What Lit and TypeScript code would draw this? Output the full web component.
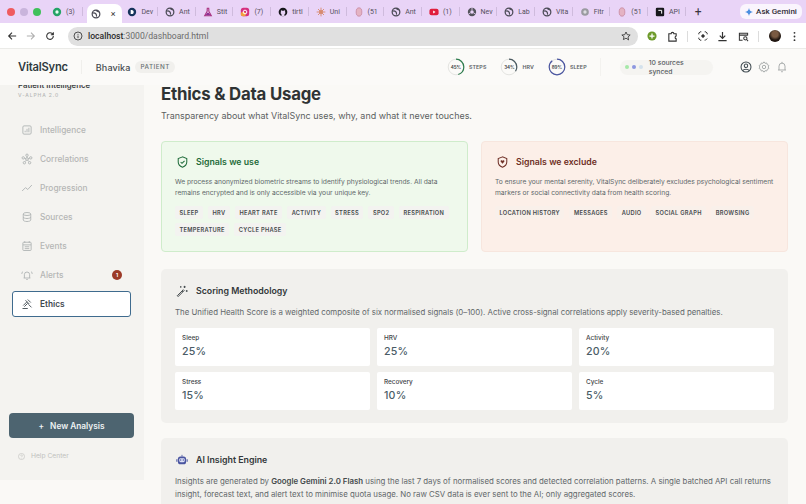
import { LitElement, html, css, svg } from 'lit'
import { customElement } from 'lit/decorators.js'

const globe = svg`<circle cx="6" cy="6" r="4.6" fill="none" stroke="#4a4a55" stroke-width="1.5"/><path d="M2 5c2-1 3 0 4 1s0 2 1 3M6 1.6c1 1 3 1 3.6 2.4" fill="none" stroke="#4a4a55" stroke-width="1.4"/>`

const favicons: Record<string, unknown> = {
  green: svg`<circle cx="6" cy="6" r="5" fill="#25a366"/><circle cx="6" cy="6" r="2" fill="#e7fff3"/>`,
  globe,
  dev: svg`<circle cx="6" cy="6" r="5" fill="#17345c"/><path d="M4.4 3.5v5h1.4c3 0 3-5 0-5z" fill="#fff"/>`,
  stitch: svg`<path d="M4.5 1.5h3M5 2v3L2 10.5h8L7 5V2" fill="#e9c9ee" stroke="#a8307e" stroke-width="1.3"/><path d="M3 10l2-3h2l2 3z" fill="#8d2f93"/>`,
  insta: svg`<rect x="1" y="1" width="10" height="10" rx="3" fill="#d6307f"/><rect x="1" y="6" width="6" height="5" rx="2" fill="#f2a13c"/><circle cx="6" cy="6" r="2.2" fill="none" stroke="#fff" stroke-width="1.2"/>`,
  github: svg`<circle cx="6" cy="6" r="5.2" fill="#17171c"/><path d="M4.2 11V8.5C3 8 3 6.8 3.5 6 3.3 5 3.5 4.3 3.7 4c.6 0 1.200.3 1.500.6h1.600C7.100 4.300 7.700 4 8.300 4c.2.3.4 1 .2 2 .5.800.5 2-.7 2.500V11z" fill="#e8d3f6"/>`,
  uni: svg`<circle cx="6" cy="6" r="2.4" fill="#d68a6e"/><path d="M6 .8v10.400M.8 6h10.400M2.400 2.400l7.200 7.200M9.600 2.400l-7.200 7.200" stroke="#d68a6e" stroke-width="1.1"/>`,
  thumb: svg`<ellipse cx="6" cy="6" rx="3.4" ry="5" fill="#e4b3c3" stroke="#c98ba2"/>`,
  youtube: svg`<rect x=".5" y="2" width="11" height="8" rx="2.4" fill="#e01f3d"/><path d="M5 4.300v3.400L7.800 6z" fill="#fff"/>`,
  chrome: svg`<circle cx="6" cy="6" r="5" fill="#54545c"/><circle cx="6" cy="6" r="2.1" fill="#e8d3f6"/><path d="M6 1v3M1.700 8.500l2.600-1.500M10.300 8.500 7.700 7" stroke="#e8d3f6"/>`,
  fitr: svg`<circle cx="6" cy="6" r="4.6" fill="#9a9aa0"/><circle cx="6" cy="6" r="2" fill="#dcdce0"/>`,
  api: svg`<rect x="1" y="1" width="10" height="10" rx="1.5" fill="#18181c"/><path d="M4 4h4v4" fill="none" stroke="#fff" stroke-width="1.2"/>`,
}

const tabs: Array<[string, string]> = [
  ['green', '(3)'], ['active', ''], ['dev', 'Dev'], ['globe', 'Ant'], ['stitch', 'Stit'], ['insta', '(7)'],
  ['github', 'tirtl'], ['uni', 'Uni'], ['thumb', '(51'], ['globe', 'Ant'], ['youtube', '(1)'], ['chrome', 'Nev'],
  ['globe', 'Lab'], ['globe', 'Vita'], ['fitr', 'Fitr'], ['thumb', '(51'], ['api', 'API'],
]

const nav: Array<[string, unknown]> = [
  ['Intelligence', svg`<rect x="2.5" y="2.5" width="11" height="11" rx="1.5"/><path d="M5.500 11V9M8 11V6.500M10.500 11V5"/>`],
  ['Correlations', svg`<circle cx="8" cy="3" r="1.6"/><circle cx="3" cy="6.5" r="1.6"/><circle cx="13" cy="6.5" r="1.6"/><circle cx="8" cy="8" r="1.8"/><circle cx="4.5" cy="13" r="1.6"/><circle cx="11.5" cy="13" r="1.6"/><path d="M8 5v1.200M4.500 7l2 .6M11.500 7l-2 .6M7 9.500l-1.500 2M9 9.500l1.500 2"/>`],
  ['Progression', svg`<path d="M1.500 12 6 7.500l3 2.500 5.500-6"/>`],
  ['Sources', svg`<ellipse cx="8" cy="4" rx="5" ry="2"/><path d="M3 4v8c0 1.100 2.200 2 5 2s5-.9 5-2V4M3 8c0 1.100 2.200 2 5 2s5-.9 5-2"/>`],
  ['Events', svg`<rect x="2.5" y="3" width="11" height="11" rx="1"/><path d="M5 1.500V4M11 1.500V4M2.500 6.500h11M5 9h6M5 11.500h6"/>`],
  ['Alerts', svg`<path d="M4.500 12V7.500a3.500 3.500 0 0 1 7 0V12M3.500 12h9M7 14h2M2 3.500 1 6.500M14 3.500l1 3"/>`],
]

const useTags = ['Sleep', 'HRV', 'Heart rate', 'Activity', 'Stress', 'SpO2', 'Respiration', 'Temperature', 'Cycle phase']
const excludeTags = ['Location history', 'Messages', 'Audio', 'Social graph', 'Browsing']
const weights = [['Sleep', '25%'], ['HRV', '25%'], ['Activity', '20%'], ['Stress', '15%'], ['Recovery', '10%'], ['Cycle', '5%']]
const rings = [
  ['45%', 'STEPS', '#2f7d4f', 45],
  ['34%', 'HRV', '#4b5a60', 34],
  ['89%', 'SLEEP', '#4a55a0', 89],
] as const

@customElement('app-root')
export class AppRoot extends LitElement {
  static styles = css`
    :host {
      display: flex;
      flex-direction: column;
      width: 806px;
      height: 504px;
      overflow: hidden;
      background: #faf9f6;
      font-family: Inter, 'Liberation Sans', sans-serif;
      color: #2f3334;
    }
    svg { display: block; flex: none; }

    .tabbar {
      height: 23px;
      flex: none;
      display: flex;
      align-items: center;
      background: #e9d4f7;
      font-family: Roboto, 'Liberation Sans', sans-serif;
    }
    .lights { width: 49px; flex: none; display: flex; gap: 5px; padding-left: 7px; box-sizing: border-box; }
    .lights i { width: 8px; height: 8px; border-radius: 50%; }
    .tab {
      width: 37.7px;
      height: 100%;
      flex: none;
      box-sizing: border-box;
      display: flex;
      align-items: center;
      gap: 4px;
      padding-left: 3px;
      font-size: 7px;
      color: #55505c;
      position: relative;
      overflow: hidden;
      white-space: nowrap;
    }
    .tab::after {
      content: '';
      position: absolute;
      right: 4px;
      top: 7px;
      width: 1px;
      height: 9px;
      background: #cfbbdd;
    }
    .tab.active {
      background: #fff;
      border-radius: 7px 7px 0 0;
      height: 19px;
      align-self: flex-end;
      width: 35px;
      margin-right: 2.7px;
      padding-left: 4px;
      gap: 10px;
      color: #333;
      font-size: 9px;
    }
    .tab.active::after { display: none; }
    .plus { font-size: 12px; color: #3a3540; padding-left: 5px; width: 42px; }
    .plus::after { display: none; }
    .gemini {
      flex: none;
      width: 62px;
      height: 15px;
      margin-left: auto;
      margin-right: 4px;
      background: #faf5fd;
      border-radius: 6px;
      display: flex;
      align-items: center;
      justify-content: center;
      gap: 3px;
      font-size: 8px;
      font-weight: 500;
      color: #33303a;
    }

    .toolbar {
      height: 26px;
      flex: none;
      background: #fff;
      display: flex;
      align-items: center;
      padding: 1px 8px 0 7px;
      box-sizing: border-box;
      border-bottom: 1px solid #ebebe8;
    }
    .nav-btns { display: flex; gap: 9px; width: 61px; flex: none; }
    .address {
      width: 570px;
      height: 19px;
      flex: none;
      background: #e0e0e0;
      border-radius: 10px;
      display: flex;
      align-items: center;
      padding: 0 7px 0 5px;
      box-sizing: border-box;
      gap: 5px;
      font-family: Roboto, 'Liberation Sans', sans-serif;
      font-size: 8.6px;
      color: #6b6b6b;
    }
    .address b { font-weight: 500; color: #2c2c2c; }
    .address svg:last-child { margin-left: auto; }
    .tools { display: flex; align-items: center; flex: 1; padding-left: 9px; gap: 9.5px; }
    .tools .sep { width: 1px; height: 11px; background: #dcdcdc; }
    .avatar { width: 12px; height: 12px; border-radius: 50%; background: radial-gradient(circle at 50% 35%, #7a5a42 0 30%, #201611 60%); }

    .app-head {
      height: 36px;
      flex: none;
      display: flex;
      align-items: center;
      padding: 0 18px;
      background: #fbfaf8;
      z-index: 1;
    }
    .logo { font-size: 11.2px; font-weight: 600; letter-spacing: -0.2px; color: #2f3a40; padding-right: 13px; border-right: 1px solid #f0efec; line-height: 14px; }
    .user { font-size: 9px; font-weight: 500; color: #444a4e; margin-left: 14px; letter-spacing: 0.1px; }
    .role {
      font-size: 6.3px;
      font-weight: 500;
      letter-spacing: 0.5px;
      color: #6a7073;
      background: #f1f0ed;
      border-radius: 7px;
      padding: 2px 5px;
      margin-left: 5px;
    }
    .rings { display: flex; align-items: center; margin-left: 272px; gap: 14px; padding-right: 13px; border-right: 1px solid #f3f2ef; }
    .ring { display: flex; align-items: center; gap: 4px; }
    .ring-dial { position: relative; width: 18px; height: 18px; }
    .ring-dial span {
      position: absolute;
      inset: 0;
      display: flex;
      align-items: center;
      justify-content: center;
      font-size: 4.6px;
      font-weight: 600;
      color: #3f4548;
    }
    .ring label { font-size: 5.3px; font-weight: 600; color: #5a6064; letter-spacing: 0.1px; }
    .synced {
      margin-left: 19px;
      height: 15px;
      background: #f5f4f1;
      border-radius: 8px;
      padding: 0 6px 0 5px;
      display: flex;
      align-items: center;
      gap: 3.5px;
      font-size: 6.8px;
      font-weight: 500;
      color: #5a6064;
    }
    .synced i { width: 4px; height: 4px; border-radius: 50%; }
    .synced span { margin-left: 2px; }
    .head-icons { display: flex; gap: 6px; margin-left: 27px; align-items: center; }

    .body { flex: 1; display: flex; min-height: 0; }
    .sidebar {
      width: 144px;
      height: 395px;
      flex: none;
      background: #f4f3f0;
      box-sizing: border-box;
      padding: 0 13px 0 12px;
      display: flex;
      flex-direction: column;
      overflow: hidden;
    }
    .brand { font-size: 7.8px; font-weight: 600; color: #3d4244; margin-top: -4px; line-height: 9px; padding-left: 6px; white-space: nowrap; }
    .version { font-size: 5px; letter-spacing: 0.9px; color: #b6b8b6; font-weight: 500; margin-top: 2px; padding-left: 6px; height: 7px; line-height: 7px; }
    .nav { display: flex; flex-direction: column; gap: 3px; margin-top: 18px; }
    .nav-item {
      height: 26px;
      display: flex;
      align-items: center;
      gap: 7px;
      padding-left: 9px;
      font-size: 8.3px;
      font-weight: 500;
      color: #b4b6b5;
      position: relative;
    }
    .nav-item svg { fill: none; stroke: #b0b4b4; stroke-width: 1.2; }
    .badge {
      position: absolute;
      right: 9px;
      top: 8px;
      width: 10px;
      height: 10px;
      border-radius: 50%;
      background: #9c3a28;
      color: #fff;
      font-size: 5px;
      font-weight: 700;
      display: flex;
      align-items: center;
      justify-content: center;
    }
    .nav-item.on {
      box-sizing: border-box;
      background: #fff;
      border: 1px solid #3f6b8e;
      border-radius: 3px;
      color: #3f4a50;
      font-weight: 600;
      padding-left: 8px;
    }
    .nav-item.on svg { stroke: #3f4a50; }
    .new {
      margin-top: auto;
      margin-left: -3px;
      width: 125px;
      flex: none;
      height: 25px;
      background: #4d6470;
      border-radius: 4px;
      display: flex;
      align-items: center;
      justify-content: center;
      gap: 6px;
      color: #eef2f3;
      font-size: 8.3px;
      font-weight: 600;
    }
    .help {
      display: flex;
      align-items: center;
      gap: 6px;
      margin: 14px 0 19px 6px;
      font-size: 6.7px;
      line-height: 9px;
      color: #c0c1be;
    }

    .main { flex: 1; padding: 0 18px 0 17px; min-width: 0; }
    h1 { font-size: 16.8px; font-weight: 700; letter-spacing: -0.2px; color: #2f3334; margin: 0; line-height: 19px; }
    .sub { font-size: 8.95px; color: #5a5f60; margin: 6px 0 0; line-height: 12px; }
    .cards { display: grid; grid-template-columns: 307px 307px; gap: 13px; margin-top: 19px; }
    .card {
      height: 111px;
      box-sizing: border-box;
      border-radius: 4px;
      padding: 13px 13px 0;
    }
    .card.good { background: #eff9ec; border: 1px solid #cfeccb; }
    .card.bad { background: #fcefe8; border: 1px solid #f7e6de; }
    .card-head { display: flex; align-items: center; gap: 8px; height: 13px; padding-left: 2px; }
    .card-head h3 { margin: 0; font-size: 8.75px; font-weight: 600; }
    .good h3 { color: #1f6b3a; }
    .bad h3 { color: #6e2f26; }
    .card p { margin: 9px 0 0; font-size: 6.7px; line-height: 11px; color: #60686a; }
    .tags { display: flex; flex-wrap: wrap; gap: 4px 5px; margin-top: 7px; }
    .tag {
      font-size: 5.7px;
      font-weight: 600;
      letter-spacing: 0.3px;
      text-transform: uppercase;
      color: #454a4c;
      background: #f3f3f0;
      border-radius: 2px;
      padding: 0 4.5px;
      height: 13px;
      line-height: 13px;
    }
    .bad .tag { background: #f9f0ea; }

    .panel { background: #f1f0ed; border-radius: 5px; padding: 15px 14px 0; box-sizing: border-box; margin-top: 17px; }
    .panel.score { height: 154px; }
    .panel.ai { margin-top: 15px; height: 90px; }
    .panel-head { display: flex; align-items: center; gap: 8px; height: 13px; padding-left: 1px; }
    .panel-head h3 { margin: 0; font-size: 8.8px; font-weight: 600; color: #33383a; }
    .panel p { margin: 9px 0 0; font-size: 7.83px; line-height: 13px; color: #62676a; }
    .panel p b { font-weight: 600; color: #444a4c; }
    .weights { display: grid; grid-template-columns: repeat(3, 1fr); gap: 6px 7px; margin-top: 9px; }
    .weight { background: #fff; border-radius: 2px; height: 38px; box-sizing: border-box; padding: 6px 7px; }
    .weight small { display: block; font-size: 6.4px; font-weight: 500; color: #3f4548; line-height: 9px; }
    .weight strong { display: block; font-size: 10.6px; font-weight: 500; color: #4a5c66; line-height: 13px; margin-top: 2px; letter-spacing: 0.2px; }
  `

  private _fav(name: string) {
    return html`<svg width="10" height="10" viewBox="0 0 12 12">${favicons[name]}</svg>`
  }

  private _ring(r: (typeof rings)[number]) {
    const c = 2 * Math.PI * 7.8
    return html`<div class="ring">
      <div class="ring-dial">
        <svg width="18" height="18" viewBox="0 0 18 18">
          <circle cx="9" cy="9" r="7.8" fill="none" stroke="#e4e4e1" stroke-width="1"/>
          <circle cx="9" cy="9" r="7.8" fill="none" stroke=${r[2]} stroke-width="1.2"
            stroke-dasharray="${(c * r[3]) / 100} ${c}" transform="rotate(-90 9 9)"/>
        </svg>
        <span>${r[0]}</span>
      </div>
      <label>${r[1]}</label>
    </div>`
  }

  private _chrome() {
    return html`
      <div class="tabbar">
        <div class="lights">
          <i style="background:#ef5b5f"></i><i style="background:#c9b4dc"></i><i style="background:#3fc05a"></i>
        </div>
        ${tabs.map(([icon, label]) =>
          icon === 'active'
            ? html`<div class="tab active">${this._fav('globe')}<span>×</span></div>`
            : html`<div class="tab">${this._fav(icon)}<span>${label}</span></div>`
        )}
        <div class="tab plus">+</div>
        <div class="gemini">
          <svg width="8" height="8" viewBox="0 0 12 12"><path d="M6 0c.5 3.500 2.500 5.500 6 6-3.500.5-5.500 2.500-6 6-.5-3.500-2.500-5.500-6-6 3.500-.5 5.500-2.500 6-6z" fill="#4b8fe0"/></svg>
          Ask Gemini
        </div>
      </div>
      <div class="toolbar">
        <div class="nav-btns">
          <svg width="10" height="10" viewBox="0 0 12 12" fill="none" stroke="#333" stroke-width="1.3"><path d="M11 6H2M6 2 2 6l4 4"/></svg>
          <svg width="10" height="10" viewBox="0 0 12 12" fill="none" stroke="#b0b0b0" stroke-width="1.3"><path d="M1 6h9M6 2l4 4-4 4"/></svg>
          <svg width="10" height="10" viewBox="0 0 12 12" fill="none" stroke="#333" stroke-width="1.3"><path d="M10 6a4 4 0 1 1-1.200-2.800L10 4.500M10 1.500v3H7"/></svg>
        </div>
        <div class="address">
          <svg width="10" height="10" viewBox="0 0 12 12" fill="none" stroke="#333"><circle cx="6" cy="6" r="4.8"/><path d="M6 5.500v3M6 3.500v1"/></svg>
          <span><b>localhost</b>:3000/dashboard.html</span>
          <svg width="10" height="10" viewBox="0 0 12 12" fill="none" stroke="#333"><path d="m6 1.200 1.500 3.200 3.500.4-2.600 2.400.7 3.500L6 8.600l-3.100 1.700.7-3.500L1 4.800l3.500-.4z"/></svg>
        </div>
        <div class="tools">
          <svg width="10" height="10" viewBox="0 0 12 12"><circle cx="6" cy="6" r="5.5" fill="#6d9a2a"/><path d="M6 3v6M3 6h6" stroke="#fff" stroke-width="1.5"/></svg>
          <svg width="11" height="11" viewBox="0 0 12 12" fill="none" stroke="#333" stroke-width="1.2"><path d="M2 3h2.500c0-2 3-2 3 0H10v2.500c-1.500 0-1.500 3 0 3V11H2z"/></svg>
          <span class="sep"></span>
          <svg width="10" height="10" viewBox="0 0 12 12" fill="none" stroke="#333" stroke-width="1.2"><path d="M1 4V2.500L2.500 1H4M8 1h1.500L11 2.500V4M1 8v1.500L2.500 11H4M8 11h1l2-2"/><circle cx="6" cy="6" r="1.5" fill="#333"/></svg>
          <svg width="11" height="11" viewBox="0 0 12 12" fill="none" stroke="#333" stroke-width="1.3"><path d="M6 1v7M3 5l3 3 3-3M1.500 10.500h9"/></svg>
          <svg width="11" height="11" viewBox="0 0 12 12" fill="none" stroke="#333" stroke-width="1.1"><path d="M5 10H1.500V2.500h9V5M1.500 4.500h9"/><circle cx="8" cy="8" r="1.8"/><path d="m9.500 9.500 1.500 1.500"/></svg>
          <span class="sep"></span>
          <div class="avatar"></div>
          <svg width="9" height="11" viewBox="0 0 9 12" fill="#333"><circle cx="4.5" cy="2" r="1"/><circle cx="4.5" cy="6" r="1"/><circle cx="4.5" cy="10" r="1"/></svg>
        </div>
      </div>
    `
  }

  render() {
    return html`
      ${this._chrome()}
      <header class="app-head">
        <div class="logo">VitalSync</div>
        <div class="user">Bhavika</div>
        <div class="role">PATIENT</div>
        <div class="rings">${rings.map((r) => this._ring(r))}</div>
        <div class="synced">
          <i style="background:#a5e8a8"></i><i style="background:#8d97e0"></i><i style="background:#d3e1ec"></i>
          <span>10 sources synced</span>
        </div>
        <div class="head-icons">
          <svg width="12" height="12" viewBox="0 0 14 14" fill="none" stroke="#3f4a50" stroke-width="1.2"><circle cx="7" cy="7" r="5.8"/><circle cx="7" cy="5.6" r="2"/><path d="M3.400 11c1-2 6.200-2 7.200 0"/></svg>
          <svg width="12" height="12" viewBox="0 0 14 14" fill="none" stroke="#a5a9a9" stroke-width="1.1"><path d="m7 1 1.200 1.700 2-.4.6 2 1.900.9-.8 1.800.8 1.800-1.900.9-.6 2-2-.4L7 13l-1.200-1.700-2 .4-.6-2-1.900-.9L2.100 7l-.8-1.800 1.900-.9.6-2 2 .4z"/><circle cx="7" cy="7" r="2"/></svg>
          <svg width="12" height="12" viewBox="0 0 14 14" fill="none" stroke="#a5a9a9" stroke-width="1.1"><path d="M3.500 10.500V6a3.500 3.500 0 0 1 7 0v4.500M2.300 10.500h9.400M6 12.500h2M7 1v1.500"/></svg>
        </div>
      </header>
      <div class="body">
        <aside class="sidebar">
          <div class="brand">Patient Intelligence</div>
          <div class="version">V-ALPHA 2.0</div>
          <nav class="nav">
            ${nav.map(
              ([label, icon]) => html`
                <div class="nav-item">
                  <svg width="12" height="12" viewBox="0 0 16 16">${icon}</svg>
                  ${label}
                  ${label === 'Alerts' ? html`<span class="badge">1</span>` : ''}
                </div>`
            )}
            <div class="nav-item on">
              <svg width="12" height="12" viewBox="0 0 16 16"><path d="M2 14h7M3 10l5-5M6 3l5 5M4.500 11.500 9 7M9 2l4 4M10 8.500l4 4"/></svg>
              Ethics
            </div>
          </nav>
          <div class="new"><span>+</span> New Analysis</div>
          <div class="help">
            <svg width="7" height="7" viewBox="0 0 8 8" fill="none" stroke="#c0c1be" stroke-width=".7"><circle cx="4" cy="4" r="3.5"/><path d="M3 3.200c0-1.300 2-1.300 2 0 0 .8-1 .8-1 1.500M4 5.600v.6"/></svg>
            Help Center
          </div>
        </aside>
        <main class="main">
          <h1>Ethics &amp; Data Usage</h1>
          <p class="sub">Transparency about what VitalSync uses, why, and what it never touches.</p>
          <section class="cards">
            <div class="card good">
              <div class="card-head">
                <svg width="11" height="12" viewBox="0 0 12 14" fill="none" stroke="#1f6b3a" stroke-width="1.2"><path d="M6 1 1 3v4c0 3 2.200 5 5 6 2.800-1 5-3 5-6V3z"/><path d="m3.800 7 1.600 1.600 3-3"/></svg>
                <h3>Signals we use</h3>
              </div>
              <p>We process anonymized biometric streams to identify physiological trends. All data remains encrypted and is only accessible via your unique key.</p>
              <div class="tags">${useTags.map((t) => html`<span class="tag">${t}</span>`)}</div>
            </div>
            <div class="card bad">
              <div class="card-head">
                <svg width="11" height="12" viewBox="0 0 12 14" fill="none" stroke="#6e2f26" stroke-width="1.2"><path d="M6 1 1 3v4c0 3 2.200 5 5 6 2.800-1 5-3 5-6V3z"/><path d="M6 9 3.800 6.500c-.6-1.500 1.400-2.300 2.200-1 .8-1.300 2.800-.5 2.200 1z" fill="#6e2f26" stroke="none"/></svg>
                <h3>Signals we exclude</h3>
              </div>
              <p>To ensure your mental serenity, VitalSync deliberately excludes psychological sentiment markers or social connectivity data from health scoring.</p>
              <div class="tags">${excludeTags.map((t) => html`<span class="tag">${t}</span>`)}</div>
            </div>
          </section>
          <section class="panel score">
            <div class="panel-head">
              <svg width="12" height="12" viewBox="0 0 14 14" fill="none" stroke="#3f4548" stroke-width="1.1"><path d="m1.500 12.500 7-7 1 1-7 7zM7 7l1 1"/><path d="M10 1v2.500M8.800 2.200h2.500M12.500 6v2M11.500 7h2M5.500 1.500v1.500M4.800 2.200h1.500"/></svg>
              <h3>Scoring Methodology</h3>
            </div>
            <p>The Unified Health Score is a weighted composite of six normalised signals (0–100). Active cross-signal correlations apply severity-based penalties.</p>
            <div class="weights">
              ${weights.map(([k, v]) => html`<div class="weight"><small>${k}</small><strong>${v}</strong></div>`)}
            </div>
          </section>
          <section class="panel ai">
            <div class="panel-head">
              <svg width="12" height="12" viewBox="0 0 14 14"><path d="M7 1v2" stroke="#4a55a0"/><rect x="2.2" y="3" width="9.6" height="9" rx="3" fill="#4a55a0"/><rect x="3.8" y="5" width="6.4" height="4.5" rx="1.5" fill="#dfe2f5"/><circle cx="5.5" cy="7" r=".8" fill="#4a55a0"/><circle cx="8.5" cy="7" r=".8" fill="#4a55a0"/><path d="M1 6v3M13 6v3" stroke="#4a55a0" stroke-width="1.2"/></svg>
              <h3>AI Insight Engine</h3>
            </div>
            <p>Insights are generated by <b>Google Gemini 2.0 Flash</b> using the last 7 days of normalised scores and detected correlation patterns. A single batched API call returns insight, forecast text, and alert text to minimise quota usage. No raw CSV data is ever sent to the AI; only aggregated scores.</p>
          </section>
        </main>
      </div>
    `
  }
}
